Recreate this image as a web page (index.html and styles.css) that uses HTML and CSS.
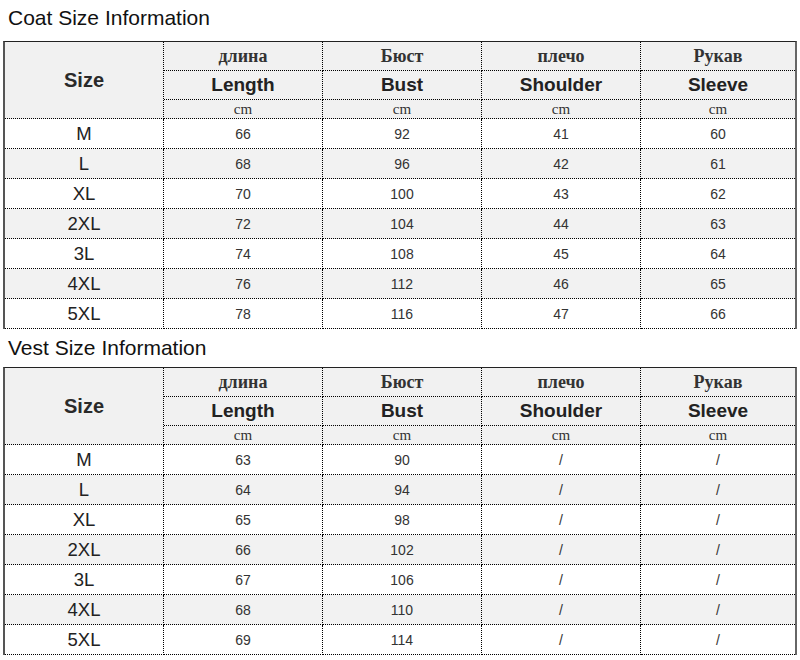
FILE: index.html
```
<!DOCTYPE html>
<html>
<head>
<meta charset="utf-8">
<link rel="stylesheet" href="styles.css">
</head>
<body>
<div class="title first">Coat Size Information</div>
<div class="sheet">
  <div class="c hd size">Size</div>
  <div class="c hd ru">длина</div>
  <div class="c hd ru">Бюст</div>
  <div class="c hd ru">плечо</div>
  <div class="c hd ru last">Рукав</div>
  <div class="c hd en">Length</div>
  <div class="c hd en">Bust</div>
  <div class="c hd en">Shoulder</div>
  <div class="c hd en last">Sleeve</div>
  <div class="c hd cm">cm</div>
  <div class="c hd cm">cm</div>
  <div class="c hd cm">cm</div>
  <div class="c hd cm last">cm</div>

  <div class="c sz">M</div><div class="c v">66</div><div class="c v">92</div><div class="c v">41</div><div class="c v last">60</div>
  <div class="c sz sh">L</div><div class="c v sh">68</div><div class="c v sh">96</div><div class="c v sh">42</div><div class="c v sh last">61</div>
  <div class="c sz">XL</div><div class="c v">70</div><div class="c v">100</div><div class="c v">43</div><div class="c v last">62</div>
  <div class="c sz sh">2XL</div><div class="c v sh">72</div><div class="c v sh">104</div><div class="c v sh">44</div><div class="c v sh last">63</div>
  <div class="c sz">3L</div><div class="c v">74</div><div class="c v">108</div><div class="c v">45</div><div class="c v last">64</div>
  <div class="c sz sh">4XL</div><div class="c v sh">76</div><div class="c v sh">112</div><div class="c v sh">46</div><div class="c v sh last">65</div>
  <div class="c sz">5XL</div><div class="c v">78</div><div class="c v">116</div><div class="c v">47</div><div class="c v last">66</div>
</div>

<div class="title second">Vest Size Information</div>
<div class="sheet">
  <div class="c hd size">Size</div>
  <div class="c hd ru">длина</div>
  <div class="c hd ru">Бюст</div>
  <div class="c hd ru">плечо</div>
  <div class="c hd ru last">Рукав</div>
  <div class="c hd en">Length</div>
  <div class="c hd en">Bust</div>
  <div class="c hd en">Shoulder</div>
  <div class="c hd en last">Sleeve</div>
  <div class="c hd cm">cm</div>
  <div class="c hd cm">cm</div>
  <div class="c hd cm">cm</div>
  <div class="c hd cm last">cm</div>

  <div class="c sz">M</div><div class="c v">63</div><div class="c v">90</div><div class="c v">/</div><div class="c v last">/</div>
  <div class="c sz sh">L</div><div class="c v sh">64</div><div class="c v sh">94</div><div class="c v sh">/</div><div class="c v sh last">/</div>
  <div class="c sz">XL</div><div class="c v">65</div><div class="c v">98</div><div class="c v">/</div><div class="c v last">/</div>
  <div class="c sz sh">2XL</div><div class="c v sh">66</div><div class="c v sh">102</div><div class="c v sh">/</div><div class="c v sh last">/</div>
  <div class="c sz">3L</div><div class="c v">67</div><div class="c v">106</div><div class="c v">/</div><div class="c v last">/</div>
  <div class="c sz sh">4XL</div><div class="c v sh">68</div><div class="c v sh">110</div><div class="c v sh">/</div><div class="c v sh last">/</div>
  <div class="c sz">5XL</div><div class="c v">69</div><div class="c v">114</div><div class="c v">/</div><div class="c v last">/</div>
</div>
</body>
</html>
```
FILE: styles.css
```
html, body {
  margin: 0;
  padding: 0;
  background: #fff;
}
body {
  font-family: "Liberation Sans", Arial, sans-serif;
  color: #222;
}
.title {
  font-size: 21px;
  color: #111;
  padding-left: 8px;
}
.title.first {
  line-height: 36px;
  margin-bottom: 5px;
}
.title.second {
  line-height: 37px;
  margin-bottom: 1px;
}
.sheet {
  margin-left: 3px;
  width: 790px;
  border-top: 1px solid #222;
  border-left: 2px solid #555;
  border-right: 2px solid #666;
  display: grid;
  grid-template-columns: 159px 159px 159px 159px 154px;
  grid-template-rows: 29px 29px 19px repeat(7, 30px);
}
.c {
  box-sizing: border-box;
  border-right: 1px dotted #000;
  border-bottom: 1px dotted #000;
  display: flex;
  align-items: center;
  justify-content: center;
  background: #fff;
}
.c.last {
  border-right: none;
}
.hd {
  background: #f1f1f1;
}
.sh {
  background: #f2f2f2;
}
.size {
  grid-row: span 3;
  font-weight: bold;
  font-size: 20px;
  color: #2a2a2a;
}
.ru {
  font-family: "Liberation Serif", "Times New Roman", serif;
  font-weight: bold;
  font-size: 18px;
  color: #333;
}
.en {
  font-weight: bold;
  font-size: 19px;
  color: #222;
}
.cm {
  font-family: "Liberation Serif", "Times New Roman", serif;
  font-size: 15px;
  color: #333;
}
.sz {
  font-size: 18.5px;
  color: #222;
}
.v {
  font-size: 14px;
  color: #333;
}
```
